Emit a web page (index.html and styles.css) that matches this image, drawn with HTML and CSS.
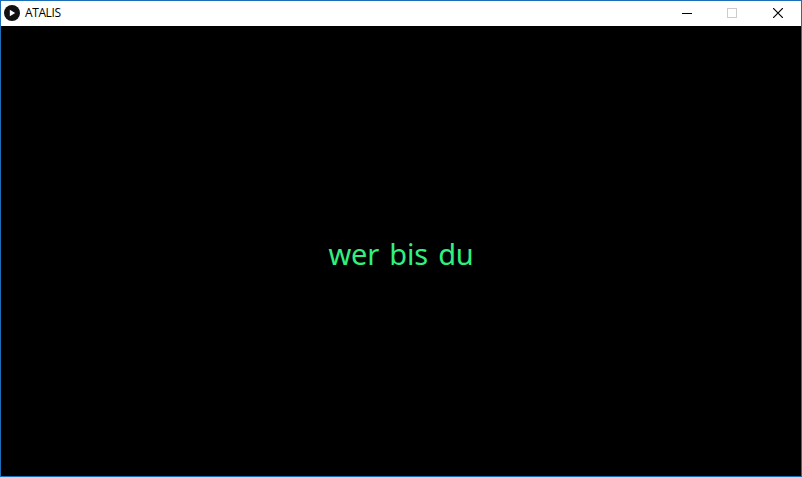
FILE: index.html
```html
<!DOCTYPE html>
<html lang="de">
<head>
<meta charset="utf-8">
<title>ATALIS</title>
<link rel="stylesheet" href="styles.css">
</head>
<body>
<div class="window">
  <header class="titlebar">
    <svg class="app-icon" width="16" height="16" viewBox="0 0 16 16"><circle cx="8" cy="8" r="8" fill="#111"/><path d="M5.8 4.8l5.4 3.2-5.4 3.2z" fill="#fff"/></svg>
    <span class="title"><span class="title-text">ATALIS</span></span>
    <div class="controls">
      <span class="control"><svg width="10" height="10" viewBox="0 0 10 10" shape-rendering="crispEdges"><path d="M0 5.5h10" stroke="#000"/></svg></span>
      <span class="control"><svg width="10" height="10" viewBox="0 0 10 10" shape-rendering="crispEdges"><path d="M.5 .5h9v9h-9z" fill="none" stroke="#ccc"/></svg></span>
      <span class="control"><svg width="10" height="10" viewBox="0 0 10 10"><path d="M0 0l10 10M10 0L0 10" stroke="#000" stroke-width="1.2"/></svg></span>
    </div>
  </header>
  <main class="canvas"><p class="message">wer bis du</p></main>
</div>
</body>
</html>
```
FILE: styles.css
```css
* { box-sizing: border-box; }
body { margin: 0; background: #fff; }
.window { width: 802px; height: 477px; border: 1px solid #1a6fb8; display: flex; flex-direction: column; }
.titlebar { height: 25px; background: #fff; display: flex; align-items: center; padding: 0 0 1px 3px; }
.app-icon { display: block; }
.title { margin-left: 5px; flex: 1; font: 12px/16px "Open Sans", sans-serif; color: #000; }
.title-text { display: inline-block; letter-spacing: -0.4px; }
.controls { display: flex; height: 100%; }
.control { width: 46px; display: flex; align-items: center; justify-content: center; }
.control:first-child { width: 44px; }
.control svg { display: block; }
.canvas { flex: 1; background: #000; display: flex; align-items: center; justify-content: center; }
.message { margin: 0; padding-top: 6px; font: 29px/40px "Noto Sans", sans-serif; color: #30f080; letter-spacing: -0.2px; word-spacing: 3px; }
```
